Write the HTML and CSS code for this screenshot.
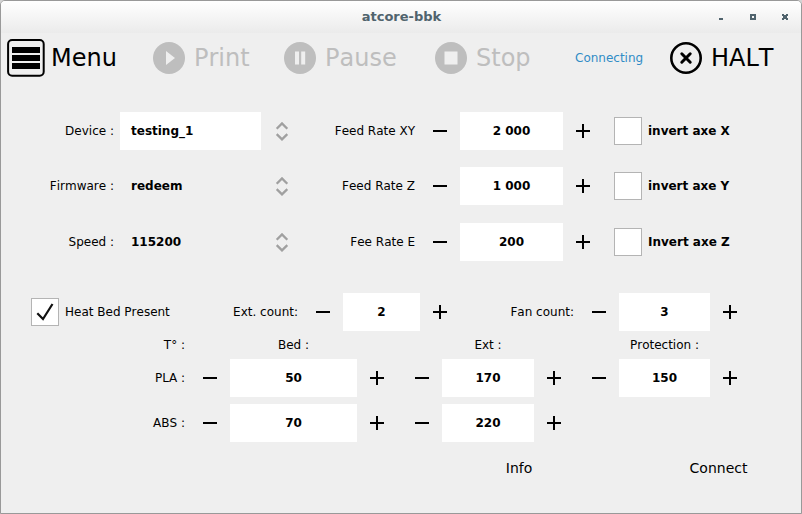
FILE: index.html
```html
<!DOCTYPE html>
<html lang="en">
<head>
<meta charset="utf-8">
<title>atcore-bbk</title>
<link rel="stylesheet" href="styles.css">
</head>
<body>
<svg class="defs" width="0" height="0" aria-hidden="true">
  <symbol id="updown" viewBox="0 0 14 20"><path d="M1.700 7.800 L7 2.500 L12.300 7.800 M1.700 13.100 L7 18.400 L12.300 13.100" fill="none" stroke="#a0a0a0" stroke-width="2.300"/></symbol>
  <symbol id="minus" viewBox="0 0 14 14"><path d="M0 6h14v2H0z"/></symbol>
  <symbol id="plus" viewBox="0 0 14 14"><path d="M0 6h14v2H0zM6 0h2v14H6z"/></symbol>
</svg>
<div class="window">
  <header class="titlebar">
    <h1 class="title">atcore-bbk</h1>
    <svg class="window-buttons" width="72" height="8" viewBox="0 0 72 8">
      <g fill="#50636d">
        <path d="M1 5h4v2H1z"/>
        <path fill-rule="evenodd" d="M32 1h6v6h-6zM34 3v2h2V3z"/>
        <path d="M64 1h2v1h2V1h2v2h-1v2h1v2h-2V6h-2v1h-2V5h1V3h-1z"/>
      </g>
    </svg>
  </header>

  <nav class="toolbar">
    <div class="tool menu">
      <svg width="38" height="38" viewBox="0 0 38 38">
        <rect x="1.1" y="1.1" width="35.6" height="35.6" rx="4" fill="none" stroke="#000" stroke-width="2"/>
        <path d="M5 8h28v6H5zM5 16h28v6H5zM5 24h28v6H5z"/>
      </svg>
      <span>Menu</span>
    </div>
    <div class="tool disabled print">
      <svg width="32" height="32" viewBox="0 0 32 32"><circle cx="16" cy="16" r="16" fill="#bebebe"/><path d="M13 9l9 7-9 7z" fill="#efefef"/></svg>
      <span>Print</span>
    </div>
    <div class="tool disabled pause">
      <svg width="32" height="32" viewBox="0 0 32 32"><circle cx="16" cy="16" r="16" fill="#bebebe"/><path d="M11 9.500h4v13h-4zM17.200 9.500h4v13h-4z" fill="#efefef"/></svg>
      <span>Pause</span>
    </div>
    <div class="tool disabled stop">
      <svg width="32" height="32" viewBox="0 0 32 32"><circle cx="16" cy="16" r="16" fill="#bebebe"/><path d="M9.500 9.500h13v13h-13z" fill="#efefef"/></svg>
      <span>Stop</span>
    </div>
    <span class="status">Connecting</span>
    <div class="tool halt">
      <svg width="32" height="32" viewBox="0 0 32 32"><g fill="none" stroke="#000"><circle cx="16" cy="16" r="14.700" stroke-width="2.600"/><path d="M11.800 11.800l8.400 8.400M20.200 11.800l-8.400 8.400" stroke-width="3" stroke-linecap="round"/></g></svg>
      <span>HALT</span>
    </div>
  </nav>

  <main class="settings">
    <section class="axes">
      <div class="row axis">
        <span class="label name">Device :</span>
        <div class="combo"><b class="active">testing_1</b><svg width="14" height="20"><use href="#updown"/></svg></div>
        <span class="label">Feed Rate XY</span>
        <div class="spin"><svg class="step"><use href="#minus"/></svg><b>2 000</b><svg class="step"><use href="#plus"/></svg></div>
        <label class="check"><i class="box"></i><b>invert axe X</b></label>
      </div>
      <div class="row axis">
        <span class="label name">Firmware :</span>
        <div class="combo"><b>redeem</b><svg width="14" height="20"><use href="#updown"/></svg></div>
        <span class="label">Feed Rate Z</span>
        <div class="spin"><svg class="step"><use href="#minus"/></svg><b>1 000</b><svg class="step"><use href="#plus"/></svg></div>
        <label class="check"><i class="box"></i><b>invert axe Y</b></label>
      </div>
      <div class="row axis">
        <span class="label name">Speed :</span>
        <div class="combo"><b>115200</b><svg width="14" height="20"><use href="#updown"/></svg></div>
        <span class="label">Fee Rate E</span>
        <div class="spin"><svg class="step"><use href="#minus"/></svg><b>200</b><svg class="step"><use href="#plus"/></svg></div>
        <label class="check"><i class="box"></i><b>Invert axe Z</b></label>
      </div>
    </section>

    <section class="row counts">
      <label class="check"><i class="box"><svg width="26" height="26" viewBox="0 0 26 26"><path d="M5.300 14.200L11 20L20.500 5" fill="none" stroke="#111" stroke-width="2.200"/></svg></i><span>Heat Bed Present</span></label>
      <span class="label">Ext. count:</span>
      <div class="spin"><svg class="step"><use href="#minus"/></svg><b>2</b><svg class="step"><use href="#plus"/></svg></div>
      <span class="label">Fan count:</span>
      <div class="spin"><svg class="step"><use href="#minus"/></svg><b>3</b><svg class="step"><use href="#plus"/></svg></div>
    </section>

    <section class="temps">
      <span class="label">T° :</span>
      <span class="heading">Bed :</span>
      <span class="heading">Ext :</span>
      <span class="heading">Protection :</span>

      <span class="label">PLA :</span>
      <div class="spin"><svg class="step"><use href="#minus"/></svg><b>50</b><svg class="step"><use href="#plus"/></svg></div>
      <div class="spin"><svg class="step"><use href="#minus"/></svg><b>170</b><svg class="step"><use href="#plus"/></svg></div>
      <div class="spin"><svg class="step"><use href="#minus"/></svg><b>150</b><svg class="step"><use href="#plus"/></svg></div>

      <span class="label">ABS :</span>
      <div class="spin"><svg class="step"><use href="#minus"/></svg><b>70</b><svg class="step"><use href="#plus"/></svg></div>
      <div class="spin"><svg class="step"><use href="#minus"/></svg><b>220</b><svg class="step"><use href="#plus"/></svg></div>
    </section>

    <footer class="actions">
      <span>Info</span>
      <span>Connect</span>
    </footer>
  </main>
</div>
</body>
</html>
```
FILE: styles.css
```css
* { box-sizing: border-box; }

body {
  margin: 0;
  background: #d4d4d4;
  color: #000;
  font: 12px/14px "DejaVu Sans", sans-serif;
  font-kerning: none;
}

svg { display: block; flex: none; }
.defs { position: absolute; }

.window {
  width: 802px;
  height: 514px;
  border: 1px solid #999;
  border-radius: 5px 5px 0 0;
  background: #efefef;
  overflow: hidden;
}

.titlebar {
  display: grid;
  grid-template-columns: 1fr auto 1fr;
  align-items: center;
  height: 32px;
  background: linear-gradient(#fff, #ebebeb);
}
.title {
  grid-column: 2;
  margin: 0;
  padding-left: 1px;
  font-size: 13px;
  line-height: 16px;
  color: #50636d;
}
.window-buttons { justify-self: end; margin-right: 11px; }

.toolbar {
  display: grid;
  grid-template-columns: 146px 131px 151px 140px 95px 1fr;
  align-items: center;
  height: 50px;
  padding-left: 6px;
}
.tool {
  display: flex;
  align-items: center;
  gap: 9px;
  font-size: 24px;
  line-height: 28px;
}
.tool.menu { gap: 6px; }
.tool.disabled { color: #bebebe; }
.status { color: #308cc6; }

.settings { padding-top: 29px; }

.axes {
  display: grid;
  grid-template-rows: 55px 56px 38px;
  align-items: start;
}
.row, .temps { display: grid; align-items: center; }
.axis { grid-template-columns: 119px 182px 118px 183px 1fr; }
.label { padding-right: 5px; text-align: right; }
.label.name { padding-right: 6px; }

.combo {
  display: grid;
  grid-template-columns: 141px 1fr;
  align-items: center;
}
.combo b { padding: 12px 11px; }
.combo b.active { background: #fff; }
.combo svg { margin-left: 14px; }

.spin {
  display: grid;
  grid-template-columns: 40px 1fr 40px;
  align-items: center;
  height: 38px;
}
.spin b {
  padding: 12px 0;
  background: #fff;
  text-align: center;
}
.step { width: 14px; height: 14px; justify-self: center; }

.check { display: flex; align-items: center; gap: 6px; }
.axis .check { padding-left: 11px; }
.box {
  width: 28px;
  height: 28px;
  border: 1px solid #b4b4b4;
  background: #fff;
}

.counts {
  grid-template-columns: 150px 122px 157px 119px 171px;
  height: 38px;
  margin-top: 32px;
  padding-left: 30px;
}

.temps {
  grid-template-columns: 184px 207px 172px 171px;
  grid-template-rows: 14px 38px 38px;
  column-gap: 5px;
  row-gap: 7px;
  margin-top: 7px;
}
.temps .label { padding-right: 0; }
.heading { text-align: center; }

.actions {
  display: grid;
  grid-template-columns: 186px 213px;
  justify-content: end;
  margin: 18px -24px 0 0;
  font-size: 14px;
  line-height: 16px;
  text-align: center;
}
```
